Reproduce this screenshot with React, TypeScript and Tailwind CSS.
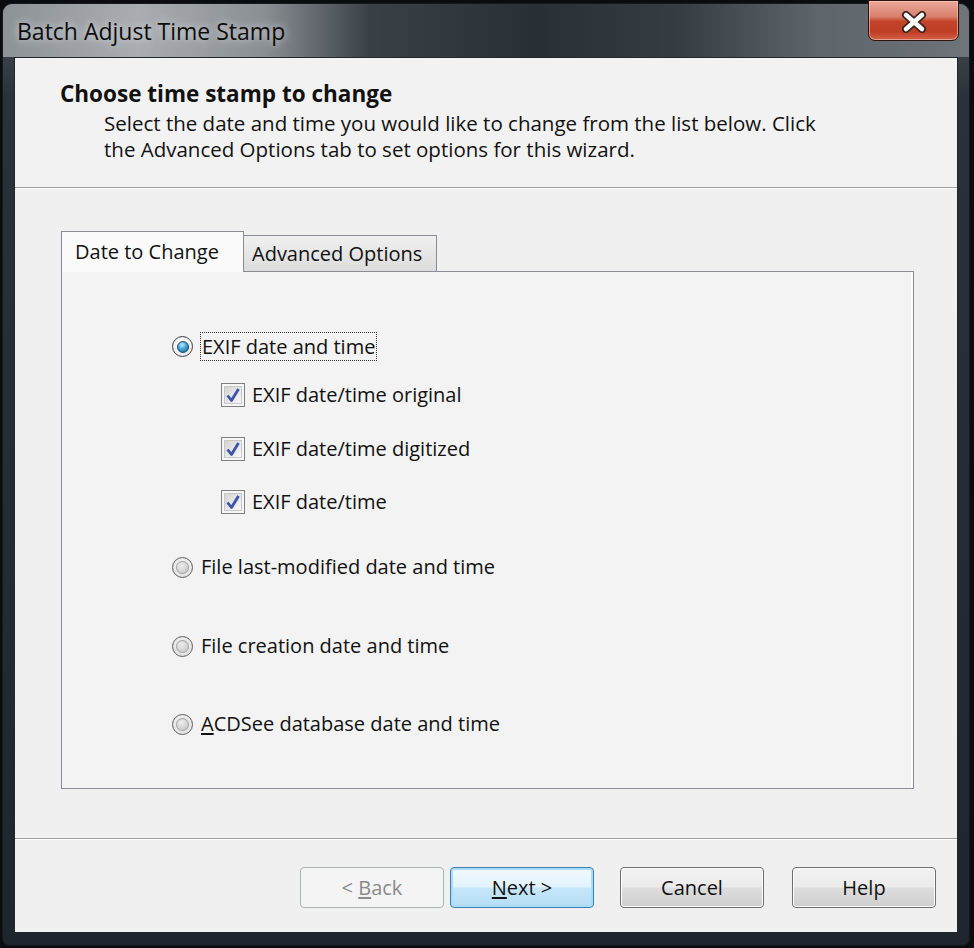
const ui = '"Open Sans", "Noto Sans", Arial, sans-serif';

function CloseButton() {
  return (
    <div className="mt-[-4px] mr-[10px] flex h-[41px] w-[91px] items-center justify-center rounded-b-[7px] border border-[#2c1510] bg-[linear-gradient(to_bottom,#eba99b_0%,#d9806d_40%,#c4442b_52%,#bf3f26_80%,#d2634a_100%)] shadow-[inset_0_0_0_1px_rgba(255,210,200,0.55)]">
      <svg width="26" height="22" viewBox="0 0 26 22" className="mt-[3px]">
        <path d="M5 4 L21 18 M21 4 L5 18" stroke="#3a2420" strokeWidth="8" strokeLinecap="round" fill="none" />
        <path d="M5 4 L21 18 M21 4 L5 18" stroke="#ffffff" strokeWidth="4.5" strokeLinecap="round" fill="none" />
      </svg>
    </div>
  );
}

function Radio({ checked }: { checked?: boolean }) {
  if (checked) {
    return (
      <span className="flex h-[21px] w-[21px] shrink-0 items-center justify-center rounded-full border border-[#3d3d3d] bg-[radial-gradient(circle_at_50%_35%,#ffffff,#e6e6e6)]">
        <span className="h-[12px] w-[12px] rounded-full border border-[#1f4a6e] bg-[radial-gradient(circle_at_40%_30%,#bfeaff_0%,#47a6d8_45%,#0d5a8f_100%)]" />
      </span>
    );
  }
  return (
    <span className="flex h-[21px] w-[21px] shrink-0 items-center justify-center rounded-full border border-[#5e5e5e] bg-[radial-gradient(circle_at_50%_40%,#f6f6f6,#dcdcdc)]">
      <span className="h-[13px] w-[13px] rounded-full bg-[radial-gradient(circle_at_40%_35%,#eeeeee,#b9b9b9)] shadow-[inset_0_0_0_1px_#a8a8a8]" />
    </span>
  );
}

function Checkbox() {
  return (
    <span className="flex h-[24px] w-[24px] shrink-0 items-center justify-center border border-[#7e7f80] bg-[#f6f6f6]">
      <span className="flex h-[18px] w-[18px] items-center justify-center border border-[#c8c8c8] bg-[linear-gradient(135deg,#d4d4d4,#f8f8f8)]">
        <svg width="16" height="16" viewBox="0 0 16 16">
          <path d="M2.5 8.5 L6.5 13.5 L13.5 2" stroke="#3d52a8" strokeWidth="2.8" fill="none" strokeLinejoin="round" />
        </svg>
      </span>
    </span>
  );
}

function Button({ children, variant }: { children: React.ReactNode; variant?: 'default' | 'disabled' }) {
  if (variant === 'default') {
    return (
      <div className="flex h-[41px] w-[144px] shrink-0 items-center justify-center rounded-[4px] border border-[#3c7fb1] bg-[linear-gradient(to_bottom,#f1f9fe_0%,#e3f3fc_48%,#c6e7fa_52%,#b5ddf5_100%)] text-[20px] text-[#111] shadow-[inset_0_0_0_2px_#a9ddf5]">
        {children}
      </div>
    );
  }
  if (variant === 'disabled') {
    return (
      <div className="flex h-[41px] w-[144px] shrink-0 items-center justify-center rounded-[4px] border border-[#adb2b5] bg-[#f4f4f4] text-[20px] text-[#8a8a8a]">
        {children}
      </div>
    );
  }
  return (
    <div className="flex h-[41px] w-[144px] shrink-0 items-center justify-center rounded-[4px] border border-[#707070] bg-[linear-gradient(to_bottom,#f2f2f2_0%,#ebebeb_48%,#dddddd_52%,#cfcfcf_100%)] text-[20px] text-[#111] shadow-[inset_0_0_0_1px_#fcfcfc]">
      {children}
    </div>
  );
}

export default function App() {
  return (
    <div className="h-[948px] w-[974px] overflow-hidden bg-[#0a0c0f] pl-[2px] pt-[3px]" style={{ fontFamily: ui }}>
      <div className="flex h-[943px] w-[968px] flex-col rounded-t-[10px] rounded-b-[7px] border border-[#15191d] bg-[linear-gradient(to_bottom,#4b5258_0%,#2a3138_10%,#1e252c_100%)]">
        {/* title bar */}
        <div className="flex h-[53px] shrink-0 items-start justify-between rounded-t-[9px] bg-[linear-gradient(to_right,#8d9297_0%,#a9adb1_14%,#8a8f94_27%,#3a4146_38%,#282f35_55%,#353c42_70%,#5d646a_84%,#6e7479_100%)]">
          <div className="pl-[14px] pt-[12px] text-[23px] leading-[30px] text-[#0d0d0d] [text-shadow:0_0_8px_rgba(235,238,240,0.95)]">
            Batch Adjust Time Stamp
          </div>
          <CloseButton />
        </div>

        {/* client area */}
        <div className="ml-[11px] flex h-[876px] w-[944px] flex-col border border-[#20262b] bg-[#f0f0f0]">
          {/* header */}
          <div className="h-[130px] shrink-0 border-b border-[#a0a0a0] bg-[#f2f2f2] pl-[45px] pt-[21px]">
            <div className="text-[22.5px] font-bold leading-[29px] text-[#111]">Choose time stamp to change</div>
            <div className="pl-[44px] pt-[2px] text-[20.5px] leading-[26px] text-[#111]">
              Select the date and time you would like to change from the list below. Click
              <br />
              the Advanced Options tab to set options for this wizard.
            </div>
          </div>

          {/* body */}
          <div className="flex h-[650px] shrink-0 flex-col border-t border-white px-[46px] pt-[42px]">
            <div className="flex items-end">
              <div className="z-10 mb-[-1px] flex h-[41px] w-[183px] items-center border border-b-0 border-[#898c95] bg-[#fbfbfb] pl-[13px] text-[20px] text-[#111]">
                Date to Change
              </div>
              <div className="flex h-[36px] w-[193px] items-center border border-l-0 border-b-0 border-[#898c95] bg-[linear-gradient(to_bottom,#f0f0f0,#dcdcdc)] pl-[8px] text-[20px] text-[#111]">
                Advanced Options
              </div>
            </div>
            <div className="flex h-[518px] w-[853px] flex-col border border-[#898c95] bg-[#f3f3f3] pl-[110px] pt-[60px] shadow-[inset_-2px_0_0_#ffffff]">
              <div className="flex h-[29px] items-center">
                <Radio checked />
                <span className="ml-[7px] border border-dotted border-[#333] px-[1px] text-[20px] leading-[27px] text-[#111]">EXIF date and time</span>
              </div>
              <div className="mt-[20px] flex h-[28px] items-center pl-[49px]">
                <Checkbox />
                <span className="ml-[7px] text-[20px] text-[#111]">EXIF date/time original</span>
              </div>
              <div className="mt-[26px] flex h-[28px] items-center pl-[49px]">
                <Checkbox />
                <span className="ml-[7px] text-[20px] text-[#111]">EXIF date/time digitized</span>
              </div>
              <div className="mt-[25px] flex h-[28px] items-center pl-[49px]">
                <Checkbox />
                <span className="ml-[7px] text-[20px] text-[#111]">EXIF date/time</span>
              </div>
              <div className="mt-[37px] flex h-[28px] items-center">
                <Radio />
                <span className="ml-[8px] text-[20px] text-[#111]">File last-modified date and time</span>
              </div>
              <div className="mt-[51px] flex h-[28px] items-center">
                <Radio />
                <span className="ml-[8px] text-[20px] text-[#111]">File creation date and time</span>
              </div>
              <div className="mt-[50px] flex h-[28px] items-center">
                <Radio />
                <span className="ml-[8px] text-[20px] text-[#111]">
                  <span className="underline underline-offset-2">A</span>CDSee database date and time
                </span>
              </div>
            </div>
          </div>

          {/* footer */}
          <div className="flex flex-1 items-start justify-end border-t border-[#a0a0a0] pr-[21px] pt-[28px] shadow-[inset_0_1px_0_#ffffff]">
            <Button variant="disabled">
              &lt;&nbsp;<span className="underline underline-offset-2">B</span>ack
            </Button>
            <div className="w-[6px] shrink-0" />
            <Button variant="default">
              <span className="underline underline-offset-2">N</span>ext &gt;
            </Button>
            <div className="w-[26px] shrink-0" />
            <Button>Cancel</Button>
            <div className="w-[28px] shrink-0" />
            <Button>Help</Button>
          </div>
        </div>
      </div>
    </div>
  );
}
